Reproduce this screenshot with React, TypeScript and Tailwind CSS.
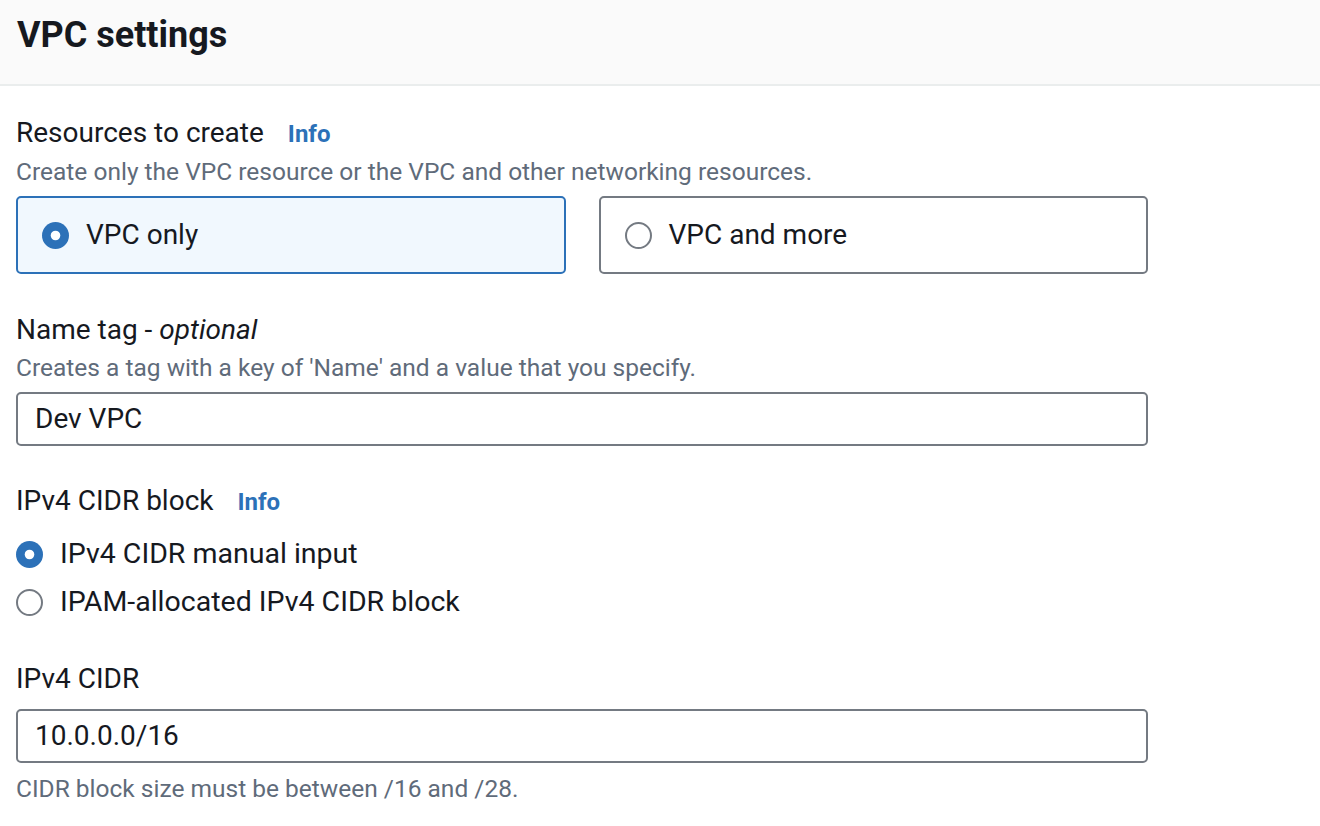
import React from "react";

const font = { fontFamily: "Roboto, 'Open Sans', sans-serif" };

const RadioDot: React.FC<{ checked?: boolean }> = ({ checked }) => (
  <svg width="27" height="27" viewBox="0 0 27 27" className="shrink-0">
    {checked ? (
      <>
        <circle cx="13.5" cy="13.5" r="13.5" fill="#2c71b8" />
        <circle cx="13.5" cy="13.5" r="4.8" fill="#ffffff" />
      </>
    ) : (
      <circle cx="13.5" cy="13.5" r="12.5" fill="#ffffff" stroke="#747a82" strokeWidth="2" />
    )}
  </svg>
);

const InfoLink = () => (
  <span className="ml-[24px] text-[24px] font-bold text-[#2c71b8]">Info</span>
);

const Tile: React.FC<{ label: string; checked?: boolean }> = ({ label, checked }) => (
  <div
    className={`flex h-[78px] items-center gap-[17px] rounded-[5px] border-2 pl-[24px] ${
      checked ? "border-[#2c71b8] bg-[#f1f8fe]" : "border-[#747a82] bg-white"
    }`}
  >
    <RadioDot checked={checked} />
    <span className="text-[28px] leading-[40px] text-[#16191f]">{label}</span>
  </div>
);

const TextInput: React.FC<{ value: string }> = ({ value }) => (
  <div className="flex h-[54px] items-center rounded-[5px] border-2 border-[#747a82] bg-white pl-[17px] text-[28px] text-[#16191f]">
    {value}
  </div>
);

export default function App() {
  return (
    <div className="min-h-[826px] w-[1320px] bg-white" style={font}>
      <div className="h-[86px] border-b-2 border-[#eaeded] bg-[#fafafa] pl-[17px] pt-[11px]">
        <h2 className="text-[36px] font-bold leading-[48px] text-[#16191f]">VPC settings</h2>
      </div>

      <div className="w-[1148px] pl-4">
        {/* Resources to create */}
        <div className="mt-[27px] flex items-baseline text-[28px] leading-[40px] text-[#16191f]">
          Resources to create
          <InfoLink />
        </div>
        <p className="mt-[2px] text-[24.5px] leading-[32px] text-[#5f6b7a]">
          Create only the VPC resource or the VPC and other networking resources.
        </p>
        <div className="mt-[8px] grid grid-cols-2 gap-[33px]">
          <Tile label="VPC only" checked />
          <Tile label="VPC and more" />
        </div>

        {/* Name tag */}
        <div className="mt-[36px] text-[28px] leading-[40px] text-[#16191f]">
          Name tag - <i>optional</i>
        </div>
        <p className="mt-[2px] text-[24.5px] leading-[32px] text-[#5f6b7a]">
          Creates a tag with a key of 'Name' and a value that you specify.
        </p>
        <div className="mt-[8px]">
          <TextInput value="Dev VPC" />
        </div>

        {/* IPv4 CIDR block */}
        <div className="mt-[35px] flex items-baseline text-[28px] leading-[40px] text-[#16191f]">
          IPv4 CIDR block
          <InfoLink />
        </div>
        <div className="mt-[8px] flex flex-col">
          <label className="flex h-[48px] items-center gap-[17px] text-[28.5px] text-[#16191f]">
            <RadioDot checked />
            IPv4 CIDR manual input
          </label>
          <label className="flex h-[48px] items-center gap-[17px] text-[28.5px] text-[#16191f]">
            <RadioDot />
            IPAM-allocated IPv4 CIDR block
          </label>
        </div>

        {/* IPv4 CIDR */}
        <div className="mt-[33px] text-[28px] leading-[40px] text-[#16191f]">IPv4 CIDR</div>
        <div className="mt-[10px]">
          <TextInput value="10.0.0.0/16" />
        </div>
        <p className="mt-[10px] text-[24.5px] leading-[32px] text-[#5f6b7a]">
          CIDR block size must be between /16 and /28.
        </p>
      </div>
    </div>
  );
}
